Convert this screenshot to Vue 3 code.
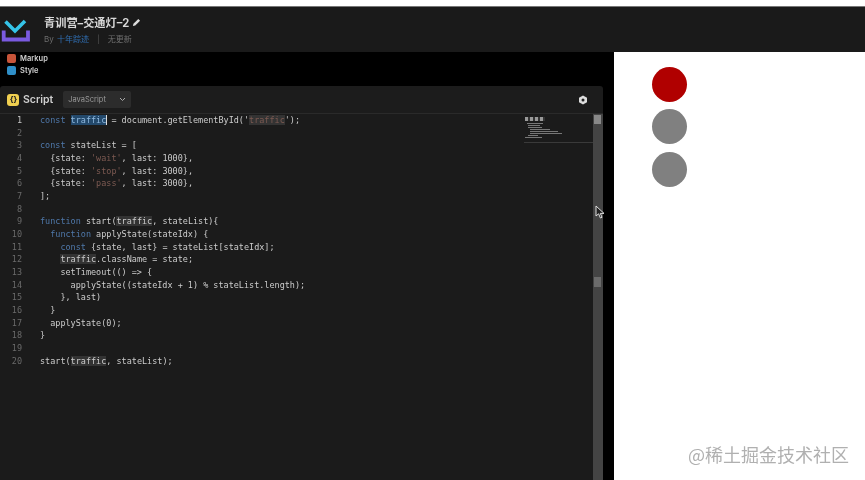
<script setup>
const k = (t) => ({ t, c: 'kw' })
const s = (t) => ({ t, c: 'str' })
const h = (t) => ({ t, c: 'hl' })
const a = (t) => ({ t, c: 'sel' })
const lines = [
  [k('const '), a('traffic'), { t: ' = document.getElementById(\'' }, { t: 'traffic', c: 'hl str' }, { t: '\');' }],
  [],
  [k('const '), { t: 'stateList = [' }],
  [{ t: '  {state: ' }, s("'wait'"), { t: ', last: 1000},' }],
  [{ t: '  {state: ' }, s("'stop'"), { t: ', last: 3000},' }],
  [{ t: '  {state: ' }, s("'pass'"), { t: ', last: 3000},' }],
  [{ t: '];' }],
  [],
  [k('function '), { t: 'start(' }, h('traffic'), { t: ', stateList){' }],
  [{ t: '  ' }, k('function '), { t: 'applyState(stateIdx) {' }],
  [{ t: '    ' }, k('const '), { t: '{state, last} = stateList[stateIdx];' }],
  [{ t: '    ' }, h('traffic'), { t: '.className = state;' }],
  [{ t: '    setTimeout(() => {' }],
  [{ t: '      applyState((stateIdx + 1) % stateList.length);' }],
  [{ t: '    }, last)' }],
  [{ t: '  }' }],
  [{ t: '  applyState(0);' }],
  [{ t: '}' }],
  [],
  [{ t: 'start(' }, h('traffic'), { t: ', stateList);' }],
]
const lights = ['on', 'off', 'off']
const miniBars = [
  [2, 16, 1], [3, 12, 1], [3, 14, 1], [5, 20, 1], [5, 28, 1], [5, 32, 1], [3, 10, 1], [0, 17, 1],
]
</script>

<template>
  <div class="page">
    <div class="topstrip"></div>
    <header class="head">
      <svg class="logo" width="32" height="28" viewBox="0 0 32 28">
        <path d="M2.7 14.5V23.5H27V14.5" fill="none" stroke="#7a5ae0" stroke-width="3.8" />
        <path d="M4.5 5.5L14 15 24 5" fill="none" stroke="#35c4e8" stroke-width="3.6" />
      </svg>
      <div class="titles">
        <div class="title">青训营–交通灯–2
          <svg width="9" height="9" viewBox="0 0 10 10"><path d="M1 9l.6-2.6L7 1l2 2-5.4 5.4z" fill="#ddd" /></svg>
        </div>
        <div class="by">By <span class="author">十年踪迹</span><span class="sep">|</span>无更新</div>
      </div>
    </header>
    <main class="body">
      <section class="left">
        <div class="tabs">
          <div class="tab"><i class="badge red"></i>Markup</div>
          <div class="tab"><i class="badge blue"></i>Style</div>
        </div>
        <div class="panel">
          <div class="panelhead">
            <span class="jsicon">{ }</span>
            <span class="script">Script</span>
            <span class="select">JavaScript
              <svg width="7" height="5" viewBox="0 0 7 5"><path d="M1 1l2.5 2.5L6 1" fill="none" stroke="#aaa" stroke-width="1" /></svg>
            </span>
            <svg class="gear" width="10" height="10" viewBox="0 0 10 10">
              <path d="M5 .5l4 2.2v4.6L5 9.5 1 7.3V2.7z" fill="#ddd" />
              <circle cx="5" cy="5" r="1.5" fill="#222" />
            </svg>
          </div>
          <div class="editor">
            <div class="code">
              <div v-for="(line, i) in lines" :key="i" class="line">
                <span class="num" :class="{ cur: i === 0 }">{{ i + 1 }}</span>
                <span class="src"><span v-for="(p, j) in line" :key="j" :class="p.c">{{ p.t }}</span></span>
              </div>
            </div>
            <div class="mini">
              <div class="miniblock"></div>
              <div v-for="(b, i) in miniBars" :key="i" class="minibar" :style="{ marginLeft: b[0] + 'px', width: b[1] + 'px' }"></div>
            </div>
            <div class="scroll">
              <div class="thumb top"></div>
              <div class="thumb mid"></div>
            </div>
            <svg class="cursor" width="10" height="14" viewBox="0 0 10 14">
              <path d="M1 1v10l2.6-2.2L5.4 13l1.6-.7-1.7-3.9H9z" fill="#222" stroke="#ddd" stroke-width="1" />
            </svg>
          </div>
        </div>
      </section>
      <section class="preview">
        <div v-for="(l, i) in lights" :key="i" class="light" :class="l"></div>
        <div class="mark">@稀土掘金技术社区</div>
      </section>
    </main>
  </div>
</template>

<style>
html, body { margin: 0; background: #000; overflow: hidden; }
</style>

<style scoped>
.page {
  width: 865px;
  height: 480px;
  display: flex;
  flex-direction: column;
  overflow: hidden;
  font-family: "Inter", "Noto Sans CJK SC", sans-serif;
  background: #000;
  position: relative;
  filter: blur(0.35px);
}
.topstrip { height: 6px; background: #fff; border-bottom: 1px solid #777; flex: none; }
.head {
  height: 45px;
  flex: none;
  background: #1a1a1a;
  display: flex;
  align-items: center;
  padding-left: 1px;
  gap: 11px;
  box-sizing: border-box;
}
.titles { display: flex; flex-direction: column; gap: 4px; margin-top: 1px; }
.title { font-size: 11.2px; line-height: 14px; color: #d8d8d8; font-weight: 700; display: flex; align-items: center; gap: 3px; }
.by { font-size: 8px; line-height: 11px; color: #6e6e6e; }
.author { color: #2f6db0; margin-left: 1px; }
.sep { margin: 0 8px; color: #555; }
.body { flex: 1; display: flex; min-height: 0; }
.left { width: 614px; flex: none; display: flex; flex-direction: column; background: #000; }
.tabs { height: 34px; flex: none; padding: 1px 0 0 7px; box-sizing: border-box; }
.tab { display: flex; align-items: center; gap: 4px; height: 11.5px; font-size: 7.5px; color: #cfcfcf; font-weight: 600; }
.badge { width: 9px; height: 9px; border-radius: 2px; display: block; }
.red { background: #c8553a; }
.blue { background: #2f8fc8; }
.panel { width: 603px; flex: 1; display: flex; flex-direction: column; min-height: 0; }
.panelhead {
  height: 27px;
  flex: none;
  background: #1c1c1c;
  border-radius: 3px 3px 0 0;
  display: flex;
  align-items: center;
  padding-left: 7px;
  position: relative;
}
.jsicon {
  width: 12px;
  height: 12px;
  border-radius: 3px;
  background: #f0d050;
  color: #222;
  font-size: 8px;
  font-weight: 700;
  line-height: 11px;
  text-align: center;
  letter-spacing: -1px;
}
.script { font-size: 10.5px; color: #cfcfcf; margin-left: 4px; font-weight: 600; }
.select {
  margin-left: 10px;
  width: 68px;
  height: 17px;
  box-sizing: border-box;
  padding: 0 5px;
  background: #2c2c2c;
  border-radius: 2px;
  font-size: 7.5px;
  color: #999;
  display: flex;
  align-items: center;
  justify-content: space-between;
}
.gear { margin-left: auto; margin-right: 15px; }
.editor {
  flex: 1;
  background: #1b1b1b;
  display: flex;
  position: relative;
  min-height: 0;
  border-top: 1px solid #2a2a2a;
}
.code {
  flex: 1;
  font-family: "DejaVu Sans Mono", "Liberation Mono", monospace;
  font-size: 8.47px;
  color: #cdcdcd;
}
.line { height: 12.68px; line-height: 12.68px; display: flex; white-space: pre; }
.num { width: 22px; text-align: right; color: #6a6a6a; margin-right: 18px; flex: none; }
.num.cur { color: #c8c8c8; }
.kw { color: #4f78aa; }
.str { color: #7d5a52; }
.hl { background: #333; }
.sel { background: #23496c; color: #8fb8de; box-shadow: 1px 0 0 #ddd; }
.mini {
  position: absolute;
  left: 524px;
  top: 0;
  width: 69px;
  height: 29px;
  border-bottom: 1px solid #3a3a3a;
  padding: 3px 0 0 1px;
  box-sizing: border-box;
}
.miniblock { width: 20px; height: 4px; margin-bottom: 2px; background: repeating-linear-gradient(90deg, #999 0 3px, #333 3px 5px); }
.minibar { height: 1px; margin-bottom: 1px; background: #777; }
.scroll {
  width: 10px;
  flex: none;
  background: #444;
  position: relative;
}
.thumb { position: absolute; left: 1px; width: 7px; background: #888; }
.thumb.top { top: 1px; height: 9px; }
.thumb.mid { top: 163px; height: 10px; background: #6b6b6b; }
.cursor { position: absolute; left: 595px; top: 91px; }
.preview {
  flex: 1;
  background: #fff;
  position: relative;
  padding: 15px 0 0 38px;
  box-sizing: border-box;
  display: flex;
  flex-direction: column;
  gap: 7.4px;
}
.light { width: 35px; height: 35px; border-radius: 50%; flex: none; }
.light.on { background: #b00000; }
.light.off { background: #808080; }
.mark {
  position: absolute;
  right: 16px;
  bottom: 14px;
  font-family: "Noto Sans CJK SC", sans-serif;
  font-size: 18px;
  line-height: 24px;
  color: #b0b0b0;
}
</style>
